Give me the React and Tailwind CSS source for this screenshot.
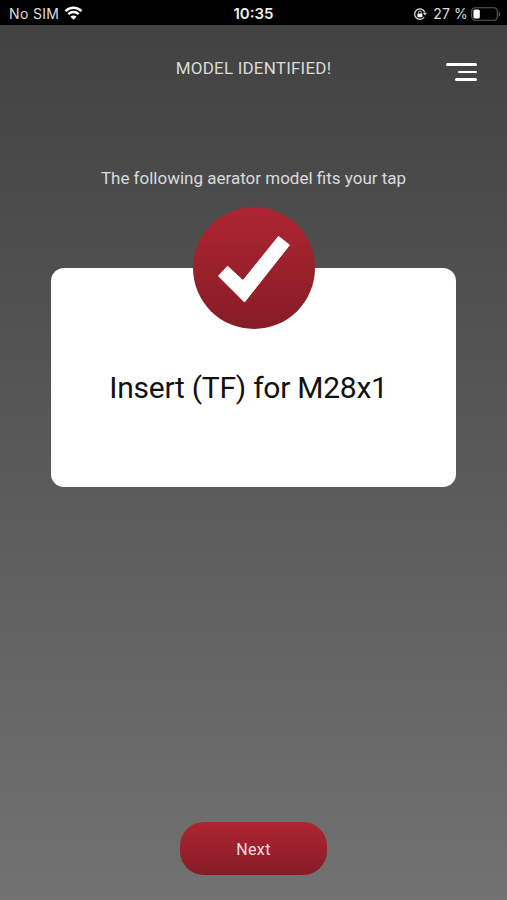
function StatusBar() {
  return (
    <div className="relative flex h-[25px] items-center justify-between bg-black pl-[9px] pr-[6px] font-['Inter','Liberation_Sans',sans-serif] text-[14px] leading-none text-[#dedede]">
      <div className="flex items-center gap-[5px] pt-[3px]">
        <span className="whitespace-nowrap tracking-[0.35px]">No SIM</span>
        <svg width="19" height="14" viewBox="0 0 18 14" fill="none" className="-mt-[3px]">
          <path d="M1 5.1a11.4 11.4 0 0 1 16 0" stroke="#fff" strokeWidth="2.4" />
          <path d="M3.8 8.1a7.5 7.5 0 0 1 10.4 0" stroke="#fff" strokeWidth="2.3" />
          <path d="M9 13.8 5.9 10.7a4.4 4.4 0 0 1 6.2 0Z" fill="#fff" />
        </svg>
      </div>

      <span className="absolute inset-x-0 top-[6px] text-center text-[15px] font-semibold text-[#ededed]">
        10:35
      </span>

      <div className="flex items-center pt-[3px]">
        <svg width="14" height="14" viewBox="0 0 14 14" fill="none" className="mr-[6px]">
          <path d="M11.7 5.2A5.2 5.2 0 1 0 11.2 10" stroke="#dedede" strokeWidth="1.3" />
          <path d="M9.8 5.7h4L12 8.6Z" fill="#dedede" />
          <rect x="4.4" y="6.4" width="5" height="3.8" rx="0.6" fill="#fff" />
          <path d="M5.4 6.6V5.5a1.5 1.5 0 0 1 3 0v1.1" stroke="#dedede" strokeWidth="0.9" />
        </svg>
        <span className="whitespace-nowrap tracking-[0.15px]">27 %</span>
        <svg width="30" height="14" viewBox="0 0 30 14" fill="none" className="-mt-px ml-[3px]">
          <rect x="0.7" y="0.7" width="25.6" height="12.6" rx="3.6" stroke="#5c5c5c" strokeWidth="1.1" />
          <rect x="2.4" y="2.4" width="6.4" height="9.2" rx="1.6" fill="#fff" />
          <path d="M27.6 4.7c1.1.4 1.7 1.2 1.7 2.3s-.6 1.9-1.7 2.3Z" fill="#5c5c5c" />
        </svg>
      </div>
    </div>
  )
}

function Header() {
  return (
    <header className="grid h-[94px] grid-cols-[1fr_auto_1fr] items-start">
      <h1 className="col-start-2 mt-[32px] whitespace-nowrap text-[17px] leading-[22px] tracking-[0.2px] text-[#dadada]">
        MODEL IDENTIFIED!
      </h1>
      <button type="button" aria-label="Menu" className="mr-[30px] mt-[38px] flex flex-col items-end gap-[5px] justify-self-end">
        <span className="h-[2.6px] w-[31px] rounded-full bg-white" />
        <span className="h-[2.6px] w-[19px] rounded-full bg-white" />
        <span className="h-[2.6px] w-[22px] rounded-full bg-white" />
      </button>
    </header>
  )
}

function CheckBadge() {
  return (
    <div className="absolute left-1/2 top-[-61px] size-[122px] -translate-x-1/2 rounded-full bg-linear-to-b from-[#ae2532] to-[#861c26]">
      <svg viewBox="0 0 122 122" className="size-full">
        <path d="M25.5 69 34.5 59.3 50 73.5 85.5 29.4 96.5 38 51.5 95Z" fill="#fff" stroke="#fff" strokeWidth="1" strokeLinejoin="round" />
      </svg>
    </div>
  )
}

export default function App() {
  return (
    <div className="flex h-screen flex-col overflow-hidden bg-[#424242] font-['Roboto','Liberation_Sans',sans-serif]">
      <StatusBar />
      <div className="flex flex-1 flex-col bg-linear-to-b from-[#424242] to-[#727272]">
        <Header />
        <p className="mt-[48px] whitespace-nowrap text-center text-[17px] leading-[22px] text-[#dadada]">
          The following aerator model fits your tap
        </p>

        <main className="relative ml-[51px] mr-[51px] mt-[79px] flex h-[219px] items-center justify-center rounded-[13px] bg-white">
          <CheckBadge />
          <h2 className="mt-[20px] whitespace-nowrap pr-[10px] text-[30px] leading-[36px] tracking-[-0.25px] text-[#111]">
            Insert (TF) for M28x1
          </h2>
        </main>

        <button
          type="button"
          className="mb-[25px] mt-auto h-[53px] w-[147px] self-center rounded-[24px] bg-linear-to-b from-[#ae2532] to-[#861c26] pt-[2px] text-[16px] tracking-[0.4px] text-[#f3dfe1]"
        >
          Next
        </button>
      </div>
    </div>
  )
}
